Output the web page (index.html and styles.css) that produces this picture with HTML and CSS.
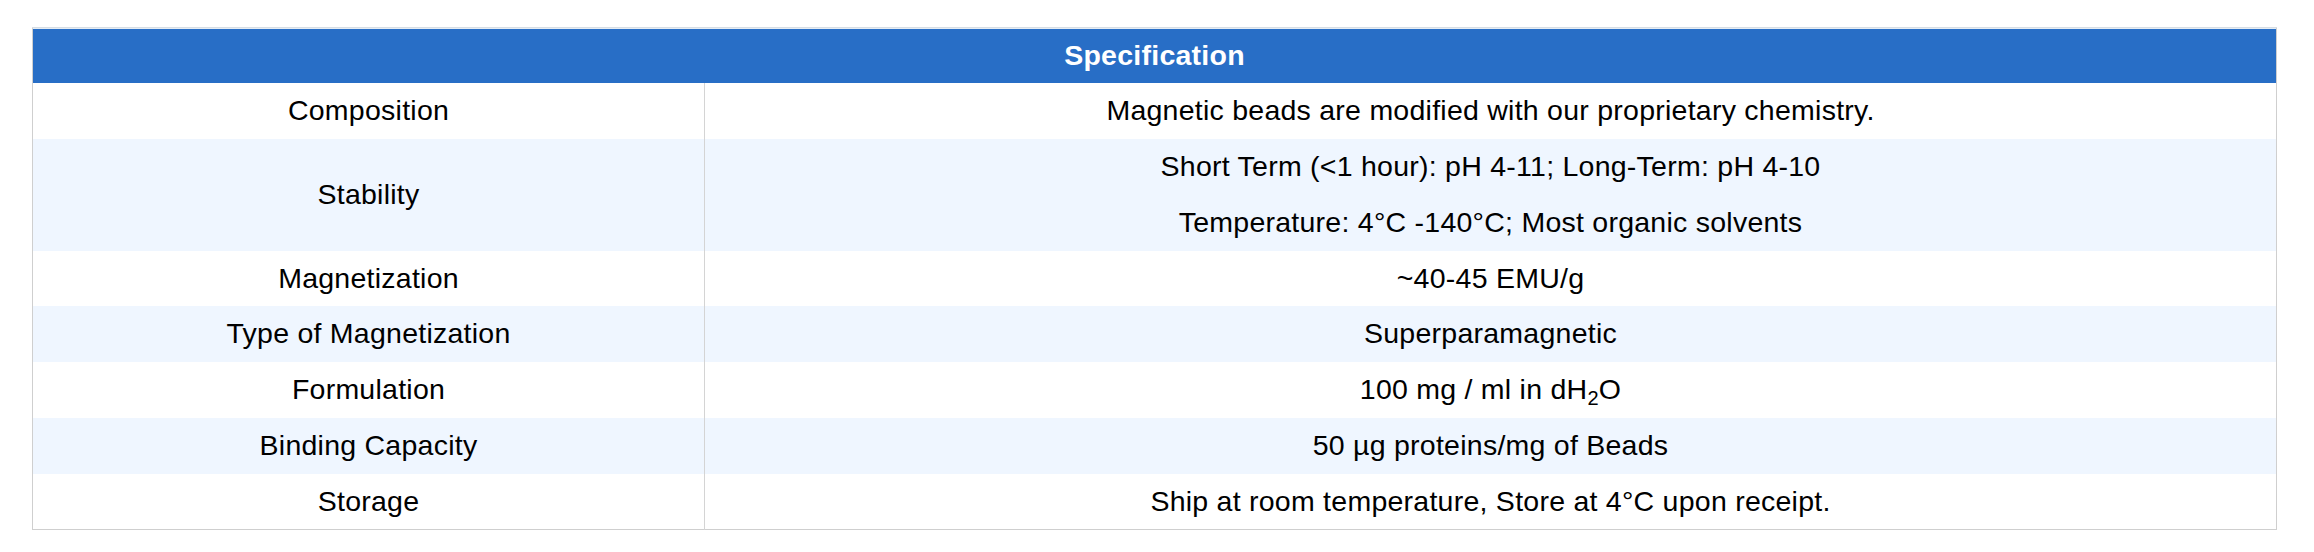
FILE: index.html
```html
<!DOCTYPE html>
<html lang="en">
<head>
<meta charset="utf-8">
<title>Specification</title>
<link rel="stylesheet" href="styles.css">
</head>
<body>
<div class="wrap">
  <table class="spec">
    <colgroup><col class="col-label"><col class="col-value"></colgroup>
    <thead>
      <tr><th colspan="2">Specification</th></tr>
    </thead>
    <tbody>
      <tr><td class="label">Composition</td><td>Magnetic beads are modified with our proprietary chemistry.</td></tr>
      <tr class="alt"><td class="label">Stability</td><td><p class="line">Short Term (&lt;1 hour): pH 4-11; Long-Term: pH 4-10</p><p class="line">Temperature: 4°C -140°C; Most organic solvents</p></td></tr>
      <tr><td class="label">Magnetization</td><td>~40-45 EMU/g</td></tr>
      <tr class="alt"><td class="label">Type of Magnetization</td><td>Superparamagnetic</td></tr>
      <tr><td class="label">Formulation</td><td>100 mg / ml in dH<sub>2</sub>O</td></tr>
      <tr class="alt"><td class="label">Binding Capacity</td><td>50 µg proteins/mg of Beads</td></tr>
      <tr><td class="label">Storage</td><td>Ship at room temperature, Store at 4°C upon receipt.</td></tr>
    </tbody>
  </table>
</div>
</body>
</html>
```
FILE: styles.css
```css
html, body {
  margin: 0;
  padding: 0;
  background: #ffffff;
}
body {
  font-family: "Liberation Sans", Arial, sans-serif;
  color: #000000;
}
.wrap {
  padding: 27px 0 0 32px;
}
.spec {
  width: 2245px;
  border-collapse: collapse;
  border: 1px solid #cfcfcf;
  table-layout: fixed;
  font-size: 28.5px;
  letter-spacing: 0.25px;
  line-height: 28px;
}
.col-label {
  width: 672px;
}
.spec thead th {
  background: #286ec6;
  color: #ffffff;
  font-weight: bold;
  text-align: center;
  height: 53px;
  padding: 0 0 2px;
  box-shadow: inset 0 1px 0 #e4ecf4;
  border-top: 1px solid #d6dde4;
}
.spec td {
  text-align: center;
  vertical-align: middle;
  padding: 13px 10px 14.75px;
}
.spec td.label {
  border-right: 1px solid #d4d4d4;
}
.spec tr.alt td {
  background: #eff6ff;
}
.line {
  margin: 0;
}
.line + .line {
  margin-top: 28px;
}
sub {
  font-size: 20px;
  line-height: 0;
  vertical-align: -6px;
}
```
